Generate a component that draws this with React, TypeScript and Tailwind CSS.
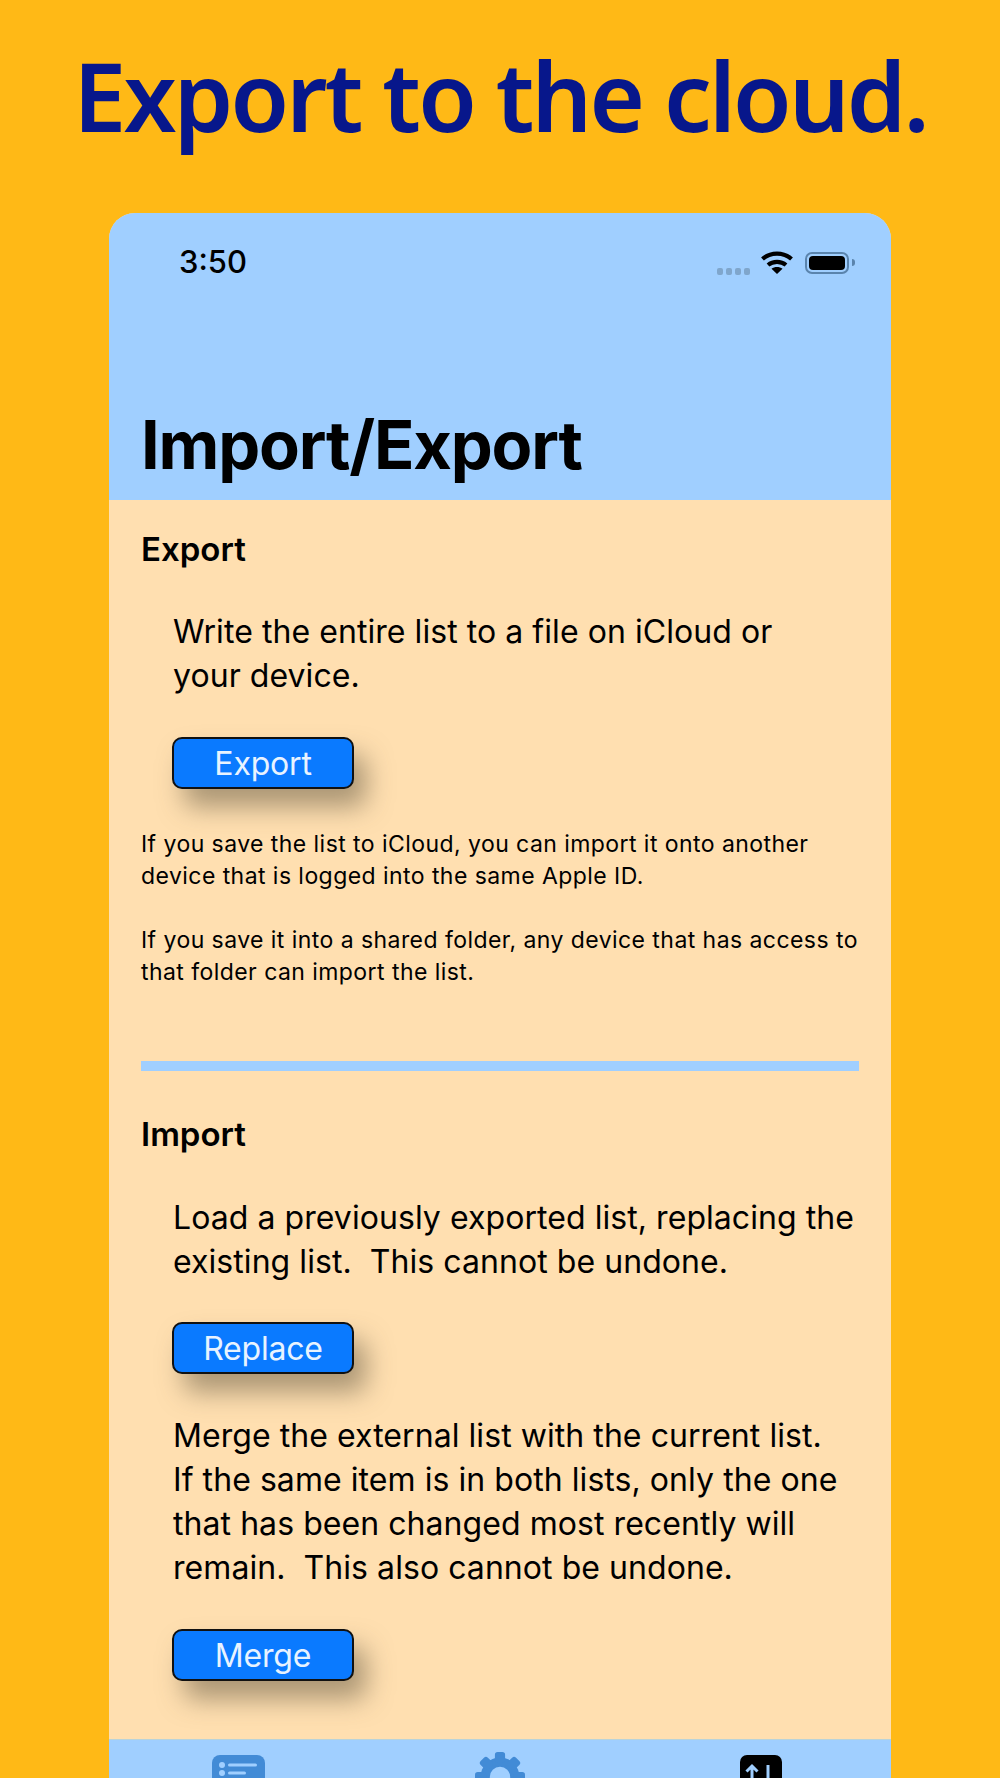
const Btn = ({ label }: { label: string }) => (
  <button className="ml-[31px] flex h-[52px] w-[182px] items-center justify-center rounded-[10px] border-2 border-[#111] bg-[#0a7aff] pt-[1px] text-[32px] leading-none tracking-[-0.2px] text-[#e8f3ff] shadow-[12px_18px_26px_rgba(90,80,60,0.5)]">
    {label}
  </button>
);

const Body = ({ children, className }: { children: React.ReactNode; className?: string }) => (
  <p className={`ml-[32px] whitespace-nowrap text-[32px] leading-[44px] tracking-[0.06px] text-black ${className ?? ''}`}>{children}</p>
);

const Small = ({ children, className }: { children: React.ReactNode; className?: string }) => (
  <p className={`whitespace-nowrap text-[23px] leading-[32px] tracking-[0.44px] text-black ${className ?? ''}`}>{children}</p>
);

const Heading = ({ children, className }: { children: React.ReactNode; className?: string }) => (
  <h2 className={`text-[33px] font-semibold leading-[40px] text-black ${className ?? ''}`}>{children}</h2>
);

const teeth = [0, 45, 90, 135, 180, 225, 270, 315];

export default function App() {
  return (
    <div className="h-[1778px] overflow-hidden bg-[#ffb916] font-['Inter',sans-serif]">
      <h1 className="pt-[40px] text-center font-['Noto_Sans',sans-serif] text-[95px] font-semibold leading-[110px] tracking-[-2.800px] text-[#07178b]">
        Export to the cloud.
      </h1>
      <div className="mx-auto mt-[63px] w-[782px] overflow-hidden rounded-t-[26px] bg-[#ffdfb0]">
        <header className="h-[287px] bg-[#a0cfff] px-[32px]">
          <div className="flex h-[98px] items-center justify-between pl-[38px] pr-[4px]">
            <span className="text-[31px] font-medium text-black">3:50</span>
            <div className="flex items-end">
              <div className="mb-[-1px] flex gap-[3px]">
                {[0, 1, 2, 3].map((i) => (
                  <span key={i} className="h-[7px] w-[6px] rounded-[2px] bg-[#7fa6cc]" />
                ))}
              </div>
              <svg className="ml-[11px]" width="32" height="23" viewBox="0 0 32 23" aria-hidden="true">
                <path d="M1.500 8C9.500 0.800 22.500 0.800 30.500 8" fill="none" stroke="#000" strokeWidth="4.200" />
                <path d="M7 14C12 9.800 20 9.800 25 14" fill="none" stroke="#000" strokeWidth="4.200" />
                <path d="M16 23L10.500 17.800C13.500 15.400 18.500 15.400 21.500 17.800Z" fill="#000" />
              </svg>
              <div className="ml-[12px] flex items-center gap-[3px]">
                <div className="h-[22px] w-[44px] rounded-[7px] border-2 border-[#5a84ad] p-[2px]">
                  <div className="h-full w-full rounded-[4px] bg-black" />
                </div>
                <div className="h-[7px] w-[3px] rounded-r-full bg-[#5a84ad]" />
              </div>
            </div>
          </div>
          <h1 className="mt-[94px] text-[66.700px] font-bold leading-[80px] tracking-[-1.200px] text-black">Import/Export</h1>
        </header>
        <main className="h-[1239px] px-[32px]">
          <Heading className="pt-[29px]">Export</Heading>
          <Body className="mt-[41px]">
            Write the entire list to a file on iCloud or
            <br />
            your device.
          </Body>
          <div className="mt-[39px]">
            <Btn label="Export" />
          </div>
          <Small className="mt-[39px]">
            If you save the list to iCloud, you can import it onto another
            <br />
            device that is logged into the same Apple ID.
          </Small>
          <Small className="mt-[32px]">
            If you save it into a shared folder, any device that has access to
            <br />
            that folder can import the list.
          </Small>
          <div className="mt-[73px] h-[10px] w-[718px] bg-[#a0cfff]" />
          <Heading className="mt-[43px]">Import</Heading>
          <Body className="mt-[42px]">
            Load a previously exported list, replacing the
            <br />
            existing list.&nbsp; This cannot be undone.
          </Body>
          <div className="mt-[38px]">
            <Btn label="Replace" />
          </div>
          <Body className="mt-[40px]">
            Merge the external list with the current list.
            <br />
            If the same item is in both lists, only the one
            <br />
            that has been changed most recently will
            <br />
            remain.&nbsp; This also cannot be undone.
          </Body>
          <div className="mt-[39px]">
            <Btn label="Merge" />
          </div>
        </main>
        <footer className="grid h-[60px] grid-cols-3 justify-items-center overflow-hidden border-t border-[#b9d3d8] bg-[#a0cfff]">
          <svg className="ml-[-2px] mt-[15px]" width="53" height="44" viewBox="0 0 53 44" aria-hidden="true">
            <rect width="53" height="44" rx="8" fill="#428bd6" />
            <circle cx="10" cy="10" r="3" fill="#a0cfff" />
            <circle cx="10" cy="18" r="3" fill="#a0cfff" />
            <rect x="16" y="8.500" width="29" height="3" rx="1.500" fill="#a0cfff" />
            <rect x="16" y="16.500" width="18" height="3" rx="1.500" fill="#a0cfff" />
          </svg>
          <svg className="mt-[12px]" width="50" height="50" viewBox="0 0 54 54" aria-hidden="true">
            <circle cx="27" cy="27" r="21" fill="#428bd6" />
            {teeth.map((a) => (
              <rect key={a} x="21.500" y="0" width="11" height="12" rx="3" fill="#428bd6" transform={`rotate(${a} 27 27)`} />
            ))}
            <circle cx="27" cy="27" r="11" fill="#a0cfff" />
          </svg>
          <svg className="mt-[15px]" width="42" height="44" viewBox="0 0 42 44" aria-hidden="true">
            <rect width="42" height="44" rx="7" fill="#000" />
            <path d="M12 24V11M6.500 16.500L12 11L17.500 16.500" fill="none" stroke="#a0cfff" strokeWidth="3" />
            <path d="M28 10V40" fill="none" stroke="#a0cfff" strokeWidth="3" />
          </svg>
        </footer>
      </div>
    </div>
  );
}
